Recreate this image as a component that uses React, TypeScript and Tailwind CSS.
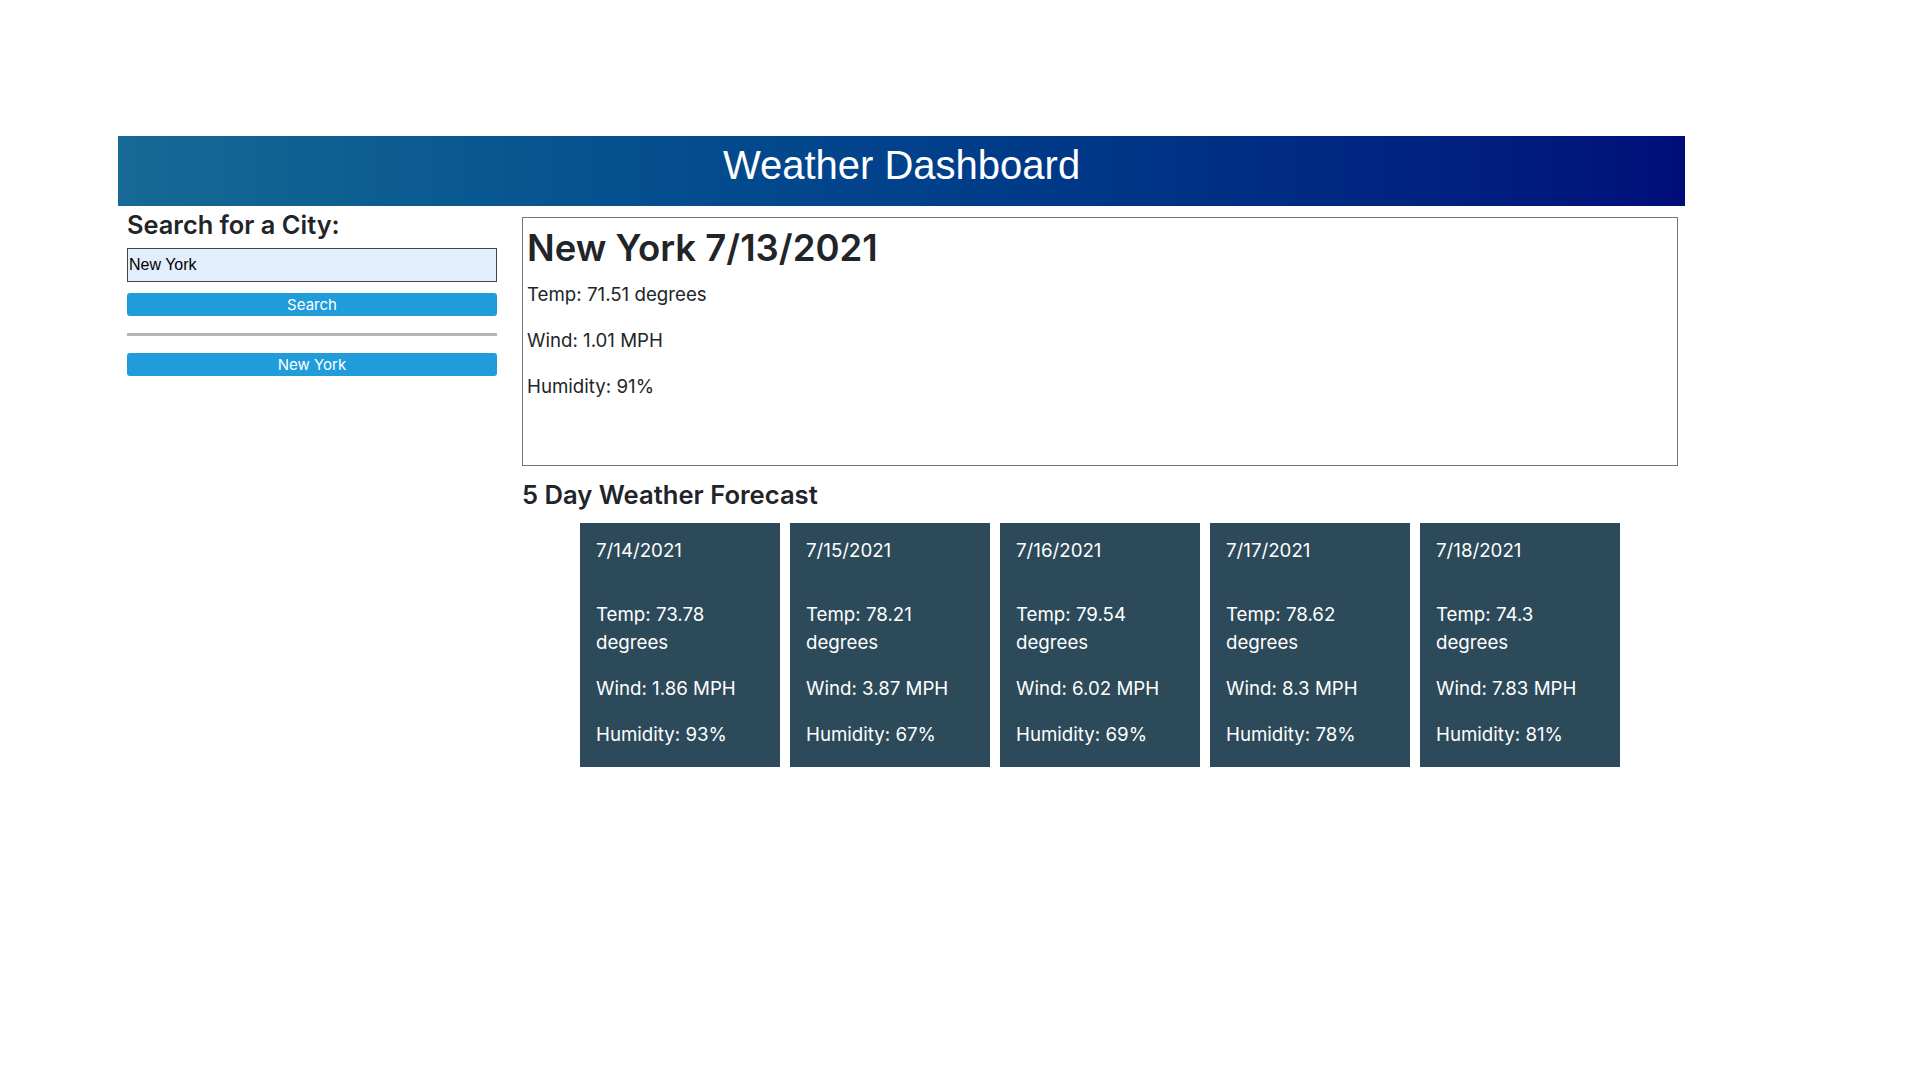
const today = {
  city: 'New York',
  date: '7/13/2021',
  temp: '71.51',
  wind: '1.01',
  humidity: '91',
}

const forecast = [
  { date: '7/14/2021', temp: '73.78', wind: '1.86', humidity: '93' },
  { date: '7/15/2021', temp: '78.21', wind: '3.87', humidity: '67' },
  { date: '7/16/2021', temp: '79.54', wind: '6.02', humidity: '69' },
  { date: '7/17/2021', temp: '78.62', wind: '8.3', humidity: '78' },
  { date: '7/18/2021', temp: '74.3', wind: '7.83', humidity: '81' },
]

const history = ['New York']

export default function App() {
  return (
    <div className="min-h-screen bg-white font-['Inter',sans-serif] text-[#212529]">
      <div className="ml-[118px] w-[1567px] pt-[136px]">
        <header className="h-[70px] bg-linear-to-r from-[#166a95] via-[#02418b] to-[#000d7a] pt-[7px] text-center">
          <h1 className="font-['Liberation_Sans',Arial,sans-serif] text-[40px] leading-[45px] text-white">
            Weather Dashboard
          </h1>
        </header>

        <div className="flex">
          <aside className="ml-[9px] w-[370px] pt-[3px]">
            <h3 className="text-[25.4px] font-semibold leading-[31px]">Search for a City:</h3>
            <input
              className="mt-[8px] block h-[34px] w-full border border-[#444] bg-[#e2eefc] px-[1px] font-['Liberation_Sans',Arial,sans-serif] text-[16px] text-black outline-none"
              defaultValue="New York"
            />
            <button className="mt-[11px] block h-[23px] w-full rounded-[3px] bg-[#209cdb] text-[15px] leading-[23px] text-white">
              Search
            </button>
            <hr className="mt-[17px] h-[3px] border-0 bg-[#b5b5b5]" />
            {history.map((city) => (
              <button
                key={city}
                className="mt-[17px] block h-[23px] w-full rounded-[3px] bg-[#209cdb] text-[15px] leading-[23px] text-white"
              >
                {city}
              </button>
            ))}
          </aside>

          <main className="ml-[25px] w-[1156px]">
            <section className="mt-[11px] h-[249px] border border-[#777] pl-[4px] pt-[8px]">
              <h2 className="mb-[9px] text-[36.5px] font-semibold leading-[45.6px]">
                {today.city} {today.date}
              </h2>
              <p className="mb-[18px] text-[18.7px] leading-[28px]">Temp: {today.temp} degrees</p>
              <p className="mb-[18px] text-[18.7px] leading-[28px]">Wind: {today.wind} MPH</p>
              <p className="mb-[18px] text-[18.7px] leading-[28px]">Humidity: {today.humidity}%</p>
            </section>

            <h3 className="mt-[13px] text-[25.6px] font-semibold leading-[31px]">5 Day Weather Forecast</h3>

            <div className="mt-[13px] flex justify-center gap-[10px]">
              {forecast.map((day) => (
                <div
                  key={day.date}
                  className="h-[244px] w-[200px] bg-[#2c4a5a] px-[16px] pt-[14px] text-[18.7px] leading-[28px] text-white"
                >
                  <p className="mb-[36px]">{day.date}</p>
                  <p className="mb-[18px]">Temp: {day.temp} degrees</p>
                  <p className="mb-[18px]">Wind: {day.wind} MPH</p>
                  <p>Humidity: {day.humidity}%</p>
                </div>
              ))}
            </div>
          </main>
        </div>
      </div>
    </div>
  )
}
